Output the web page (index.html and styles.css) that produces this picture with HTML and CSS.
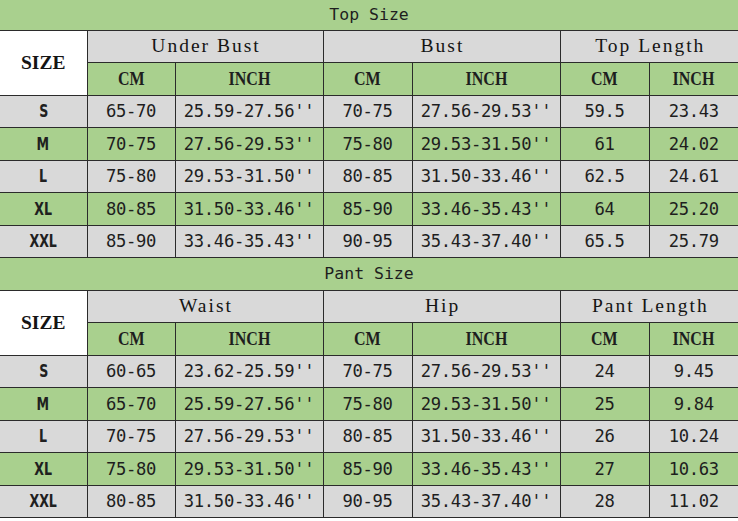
FILE: index.html
```html
<!DOCTYPE html>
<html>
<head>
<meta charset="utf-8">
<link rel="stylesheet" href="styles.css">
</head>
<body>
<table class="chart">
  <colgroup>
    <col class="c-size"><col class="c-cm"><col class="c-in"><col class="c-cm2"><col class="c-in"><col class="c-cm2"><col class="c-cm2">
  </colgroup>
  <tbody>
    <tr class="title first"><td colspan="7">Top Size</td></tr>
    <tr class="head1">
      <td class="sizehead" rowspan="2">SIZE</td>
      <td colspan="2">Under Bust</td>
      <td colspan="2">Bust</td>
      <td colspan="2">Top Length</td>
    </tr>
    <tr class="head2">
      <td><span class="cond">CM</span></td><td><span class="cond">INCH</span></td>
      <td><span class="cond">CM</span></td><td><span class="cond">INCH</span></td>
      <td><span class="cond">CM</span></td><td><span class="cond">INCH</span></td>
    </tr>
    <tr class="grey"><td class="lbl"><span class="cond">S</span></td><td>65-70</td><td>25.59-27.56''</td><td>70-75</td><td>27.56-29.53''</td><td>59.5</td><td>23.43</td></tr>
    <tr class="green"><td class="lbl"><span class="cond">M</span></td><td>70-75</td><td>27.56-29.53''</td><td>75-80</td><td>29.53-31.50''</td><td>61</td><td>24.02</td></tr>
    <tr class="grey"><td class="lbl"><span class="cond">L</span></td><td>75-80</td><td>29.53-31.50''</td><td>80-85</td><td>31.50-33.46''</td><td>62.5</td><td>24.61</td></tr>
    <tr class="green"><td class="lbl"><span class="cond">XL</span></td><td>80-85</td><td>31.50-33.46''</td><td>85-90</td><td>33.46-35.43''</td><td>64</td><td>25.20</td></tr>
    <tr class="grey"><td class="lbl"><span class="cond">XXL</span></td><td>85-90</td><td>33.46-35.43''</td><td>90-95</td><td>35.43-37.40''</td><td>65.5</td><td>25.79</td></tr>

    <tr class="title"><td colspan="7">Pant Size</td></tr>
    <tr class="head1">
      <td class="sizehead" rowspan="2">SIZE</td>
      <td colspan="2">Waist</td>
      <td colspan="2">Hip</td>
      <td colspan="2">Pant Length</td>
    </tr>
    <tr class="head2">
      <td><span class="cond">CM</span></td><td><span class="cond">INCH</span></td>
      <td><span class="cond">CM</span></td><td><span class="cond">INCH</span></td>
      <td><span class="cond">CM</span></td><td><span class="cond">INCH</span></td>
    </tr>
    <tr class="grey"><td class="lbl"><span class="cond">S</span></td><td>60-65</td><td>23.62-25.59''</td><td>70-75</td><td>27.56-29.53''</td><td>24</td><td>9.45</td></tr>
    <tr class="green"><td class="lbl"><span class="cond">M</span></td><td>65-70</td><td>25.59-27.56''</td><td>75-80</td><td>29.53-31.50''</td><td>25</td><td>9.84</td></tr>
    <tr class="grey"><td class="lbl"><span class="cond">L</span></td><td>70-75</td><td>27.56-29.53''</td><td>80-85</td><td>31.50-33.46''</td><td>26</td><td>10.24</td></tr>
    <tr class="green"><td class="lbl"><span class="cond">XL</span></td><td>75-80</td><td>29.53-31.50''</td><td>85-90</td><td>33.46-35.43''</td><td>27</td><td>10.63</td></tr>
    <tr class="grey"><td class="lbl"><span class="cond">XXL</span></td><td>80-85</td><td>31.50-33.46''</td><td>90-95</td><td>35.43-37.40''</td><td>28</td><td>11.02</td></tr>
  </tbody>
</table>
</body>
</html>
```

FILE: styles.css
```css
html, body {
  margin: 0;
  padding: 0;
  background: #ffffff;
}

.chart {
  border-collapse: collapse;
  table-layout: fixed;
  width: 738px;
  color: #1e1e1e;
  font-family: "DejaVu Sans Mono", monospace;
  font-size: 17.2px;
  letter-spacing: -0.3px;
}

.c-size { width: 87px; }
.c-cm { width: 88px; }
.c-in { width: 148px; }
.c-cm2 { width: 89px; }

.chart td {
  border: 1px solid #2b2b2b;
  padding: 0;
  text-align: center;
  vertical-align: middle;
  white-space: nowrap;
  overflow: hidden;
}

.chart tr td:first-child { border-left: none; }
.chart tr td:last-child { border-right: none; }

.chart tr {
  height: 32.5px;
}

.title td {
  background: #a9d08e;
  border-left: none;
  border-right: none;
  font-family: "DejaVu Sans Mono", monospace;
  font-size: 16.5px;
  letter-spacing: 0;
}

.title.first {
  height: 30px;
}

.title.first td {
  border-top: none;
}

.head1 td {
  background: #d9d9d9;
  font-family: "Liberation Serif", serif;
  font-size: 19.5px;
  letter-spacing: 2px;
  text-indent: 2px;
  color: #141414;
}

.head1 td.sizehead {
  background: #ffffff;
  font-weight: bold;
  letter-spacing: 0;
  text-indent: 0;
}

.head2 td {
  background: #a9d08e;
  font-family: "Liberation Serif", serif;
  font-weight: bold;
  font-size: 19.5px;
  letter-spacing: 0;
}

.cond {
  display: inline-block;
  transform: scaleX(0.82);
}

.grey td { background: #d9d9d9; }
.green td { background: #a9d08e; }

.chart td.lbl {
  font-family: "DejaVu Sans Condensed", "DejaVu Sans", sans-serif;
  font-weight: bold;
  font-size: 17.5px;
  letter-spacing: 0;
  color: #202020;
}

.lbl .cond {
  transform: scaleX(0.8);
}
```
